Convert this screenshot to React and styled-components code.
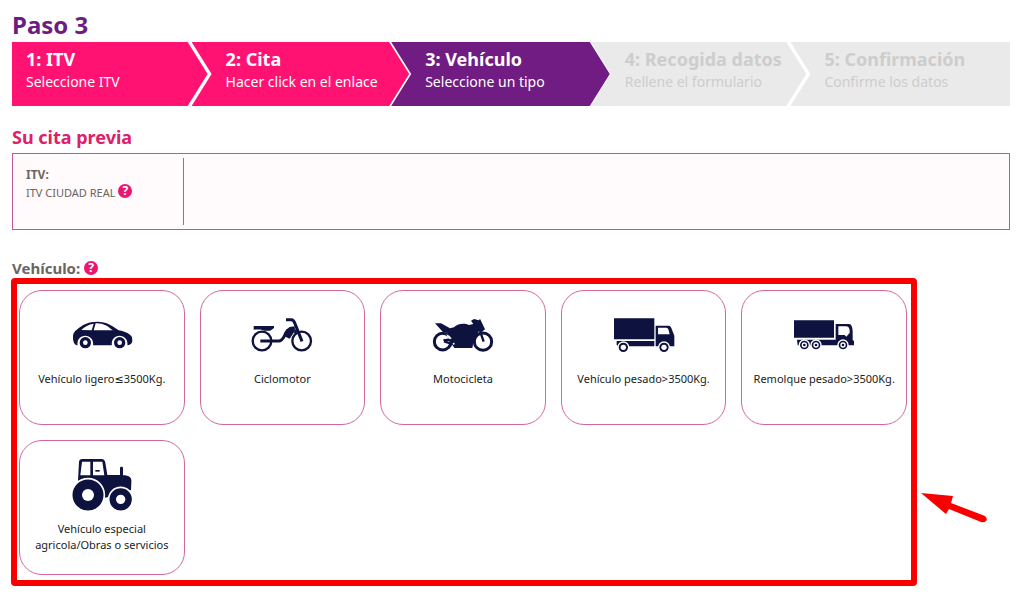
import React from 'react'
import styled, { createGlobalStyle } from 'styled-components'

const GlobalStyle = createGlobalStyle`
  body {
    margin: 0;
    background: #fff;
    color: #222;
    font-family: Tahoma, 'Noto Sans', 'DejaVu Sans', sans-serif;
    font-size: 12px;
  }

  button {
    font: inherit;
    color: inherit;
    cursor: pointer;
  }
`

const Page = styled.main`
  padding: 10px 14px 18px 12px;
`

const Title = styled.h1`
  margin: 0 0 2px;
  font-size: 24px;
  line-height: 30px;
  color: #6b1d82;
`

const Steps = styled.ol`
  display: flex;
  margin: 0;
  padding: 0;
  list-style: none;
`

const stepColors = {
  done: { background: '#ff1272', color: '#fff' },
  current: { background: '#701c82', color: '#fff' },
  pending: { background: '#eaeaea', color: '#cdcdcd' },
}

const Step = styled.li`
  flex: 1 1 0;
  min-width: 0;
`

const StepBody = styled.div`
  box-sizing: border-box;
  height: 64px;
  padding: 6px 0 0 34px;
  margin: 0 ${({ $gap }) => $gap}px 0 -20px;
  white-space: nowrap;
  background: ${({ $state }) => stepColors[$state].background};
  color: ${({ $state }) => stepColors[$state].color};
  clip-path: polygon(0 0, calc(100% - 20px) 0, 100% 50%, calc(100% - 20px) 100%, 0 100%, 20px 50%);

  ${Step}:first-child & {
    margin-left: 0;
    padding-left: 14px;
    clip-path: polygon(0 0, calc(100% - 20px) 0, 100% 50%, calc(100% - 20px) 100%, 0 100%);
  }

  ${Step}:last-child & {
    clip-path: polygon(0 0, 100% 0, 100% 100%, 0 100%, 20px 50%);
  }
`

const StepName = styled.div`
  font-size: 18px;
  font-weight: bold;
  line-height: 22px;
`

const StepHint = styled.div`
  font-size: 14px;
  line-height: 24px;
`

const Subtitle = styled.h2`
  margin: 20px 0 5px;
  font-size: 18px;
  line-height: 22px;
  color: #dc2168;
`

const Summary = styled.section`
  display: flex;
  box-sizing: border-box;
  min-height: 77px;
  padding: 4px 0;
  border: 1px solid #bf5a93;
  background: #fffafc;
`

const SummaryCell = styled.div`
  box-sizing: border-box;
  width: 171px;
  padding: 8px 0 0 13px;
  border-right: 1px solid #bf5a93;
  color: #6b655f;
  font-size: 11px;
  line-height: 18px;
`

const SummaryName = styled.div`
  font-size: 12px;
  font-weight: bold;
`

const Help = styled.button`
  display: inline-block;
  width: 14px;
  height: 14px;
  padding: 0;
  border: 0;
  border-radius: 50%;
  background: #ec1670;
  color: #fff;
  font-size: 12px;
  font-weight: bold;
  line-height: 14px;
  text-align: center;
  vertical-align: 2px;
`

const FieldLabel = styled.h3`
  margin: 28px 0 0;
  font-size: 15px;
  line-height: 20px;
  color: #6b655f;
`

const Chooser = styled.div`
  display: flex;
`

const Frame = styled.div`
  flex: 1;
  display: grid;
  grid-template-columns: repeat(5, 1fr);
  grid-auto-rows: 135px;
  gap: 15px;
  padding: 6px 4px 5px 2px;
  margin-left: -1px;
  border: 6px solid #f80000;
  border-radius: 4px;
`

const Pointer = styled.svg`
  width: 66px;
  height: 32px;
  margin: 214px 23px 0 4px;
`

const Card = styled.button`
  display: flex;
  flex-direction: column;
  align-items: center;
  gap: 5px;
  padding: 13px 8px 0;
  border: 1px solid #d4669f;
  border-radius: 23px;
  background: #fff;
  font-size: 11px;
  line-height: 16px;
`

const Icon = styled.svg`
  flex: none;
  width: 62px;
  height: 62px;
  fill: #0d123f;
`

const Car = () => (
  <Icon viewBox="33 -3 186 186">
    <path d="M39 98C38 88 42 80 52 73C66 60 84 50 112 50C140 50 158 63 176 76C198 80 211 87 216 97L217 108C216 116 211 119 203 121H50C42 118 39 109 39 98Z" />
    <path fill="#fff" d="M64 75C74 65 86 58 101 56L95 76ZM107 55C130 54 144 64 158 76H101Z" />
    <path fill="#fff" d="M53 124C45 82 106 82 99 124ZM156 124C148 82 209 82 202 124Z" />
    <circle cx="76" cy="113" r="17" />
    <circle cx="179" cy="113" r="17" />
    <circle cx="76" cy="113" r="7" fill="#fff" />
    <circle cx="179" cy="113" r="7" fill="#fff" />
  </Icon>
)

const Moped = () => (
  <Icon viewBox="35 -3 186 186">
    <g fill="none" stroke="#0d123f" strokeWidth="7">
      <circle cx="68" cy="108" r="28" />
      <circle cx="187" cy="108" r="28" />
      <path strokeWidth="9" d="M63 108H118C130 108 132 98 138 87L146 74" />
      <path strokeWidth="9" d="M140 44H156C164 44 165 51 169 61L188 109" />
      <path d="M166 84L174 71" />
    </g>
    <path d="M43 63H104V69L97 74L92 77H76C62 71 53 74 43 74Z" />
    <path d="M151 66L166 64L167 77L151 101L135 94C132 87 137 78 143 72Z" />
  </Icon>
)

const Motorbike = () => (
  <Icon viewBox="36 -3 186 186">
    <g fill="none" stroke="#0d123f" strokeWidth="9">
      <circle cx="68" cy="110" r="25" />
      <circle cx="189" cy="110" r="26" />
    </g>
    <path d="M45 55H63L90 70L102 67C109 57 132 52 147 60L160 57L153 47L162 42L177 46L180 41L185 52L195 73L185 81L177 78L173 87L162 103L157 129H103L98 121L91 108H70V103L90 100L82 84L68 80Z" />
    <path fill="#fff" d="M79 88L88 92L95 100L90 103L83 98Z" />
    <path fill="none" stroke="#0d123f" strokeWidth="7" d="M180 78L191 110M72 109L104 119" />
    <circle cx="101" cy="116" r="3" fill="#fff" />
  </Icon>
)

const Truck = () => (
  <Icon viewBox="37 -3 186 186">
    <path d="M40 40H161V103H40ZM48 108H161V124H53L48 120ZM165 62H203C210 62 212 67 214 74L221 92V124H165Z" />
    <path fill="#fff" d="M172 68H197C203 68 205 78 207 88H172Z" />
    <g stroke="#fff" strokeWidth="4">
      <circle cx="68" cy="127" r="16" />
      <circle cx="190" cy="127" r="16" />
    </g>
    <circle cx="68" cy="127" r="8" fill="#fff" />
    <circle cx="190" cy="127" r="8" fill="#fff" />
  </Icon>
)

const HeavyTruck = () => (
  <Icon viewBox="39 -3 186 186">
    <path d="M42 46H162V98H42ZM51 104H167V57H207C216 57 218 71 218 80V105L222 108V121H53Z" />
    <path fill="#fff" d="M175 64H198C208 64 210 75 209 84L204 89L199 95L194 90H175Z" />
    <g stroke="#fff" strokeWidth="4">
      <circle cx="73" cy="120" r="15" />
      <circle cx="108" cy="120" r="15" />
      <circle cx="189" cy="120" r="15" />
    </g>
    <g fill="none" stroke="#fff" strokeWidth="4">
      <circle cx="73" cy="120" r="6" />
      <circle cx="108" cy="120" r="6" />
      <circle cx="189" cy="120" r="6" />
    </g>
  </Icon>
)

const Tractor = () => (
  <Icon viewBox="33 12 186 186">
    <path d="M57 36C58 29 61 27 68 27H124C132 27 134 31 136 38L142 75H180V54C180 49 189 49 189 54V76C208 76 216 83 214 98L213 120L136 143L54 92Z" />
    <path fill="#fff" d="M66 35H91V76H61ZM99 35H127L133 76H99Z" />
    <path d="M106 60H119V65H106Z" />
    <circle cx="84" cy="135" r="49" stroke="#fff" strokeWidth="5" />
    <circle cx="182" cy="148" r="36" stroke="#fff" strokeWidth="5" />
    <circle cx="84" cy="135" r="18" fill="#fff" />
    <circle cx="182" cy="148" r="14" fill="#fff" />
  </Icon>
)

const steps = [
  { name: '1: ITV', hint: 'Seleccione ITV', state: 'done', gap: 4 },
  { name: '2: Cita', hint: 'Hacer click en el enlace', state: 'done', gap: 2 },
  { name: '3: Vehículo', hint: 'Seleccione un tipo', state: 'current', gap: 1 },
  { name: '4: Recogida datos', hint: 'Rellene el formulario', state: 'pending', gap: 4 },
  { name: '5: Confirmación', hint: 'Confirme los datos', state: 'pending', gap: 0 },
]

const vehicles = [
  { label: 'Vehículo ligero≤3500Kg.', icon: Car },
  { label: 'Ciclomotor', icon: Moped },
  { label: 'Motocicleta', icon: Motorbike },
  { label: 'Vehículo pesado>3500Kg.', icon: Truck },
  { label: 'Remolque pesado>3500Kg.', icon: HeavyTruck },
  { label: 'Vehículo especial agricola/Obras o servicios', icon: Tractor },
]

const App = () => {
  return (
    <Page>
      <GlobalStyle />
      <Title>Paso 3</Title>
      <Steps>
        {steps.map(({ name, hint, state, gap }) => (
          <Step key={name} aria-current={state === 'current' ? 'step' : undefined}>
            <StepBody $state={state} $gap={gap}>
              <StepName>{name}</StepName>
              <StepHint>{hint}</StepHint>
            </StepBody>
          </Step>
        ))}
      </Steps>

      <Subtitle>Su cita previa</Subtitle>
      <Summary>
        <SummaryCell>
          <SummaryName>ITV:</SummaryName>
          <div>
            ITV CIUDAD REAL <Help type="button">?</Help>
          </div>
        </SummaryCell>
      </Summary>

      <FieldLabel>
        Vehículo: <Help type="button">?</Help>
      </FieldLabel>
      <Chooser>
        <Frame>
          {vehicles.map(({ label, icon: VehicleIcon }) => (
            <Card key={label} type="button">
              <VehicleIcon />
              <span>{label}</span>
            </Card>
          ))}
        </Frame>
        <Pointer viewBox="0 0 66 32">
          <path fill="#f80000" d="M0 1L32 4L30 11L64 24Q67 27 65 29Q63 31 60 30L28 17L25 22Z" />
        </Pointer>
      </Chooser>
    </Page>
  )
}

export default App
